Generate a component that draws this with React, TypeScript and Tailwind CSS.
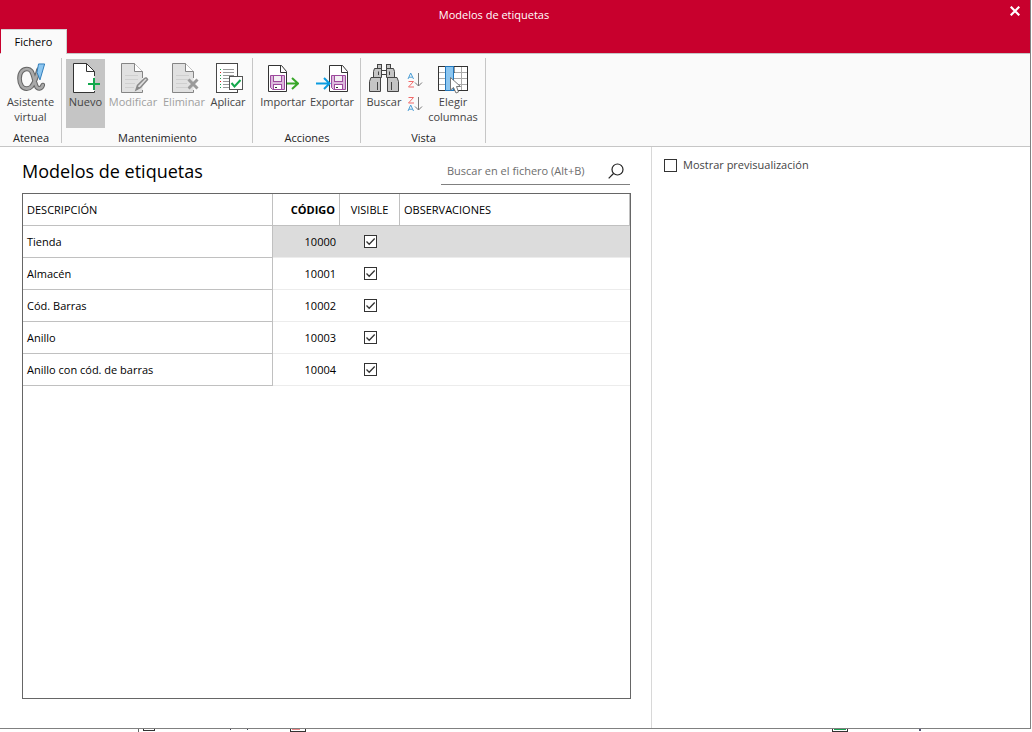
import React, { useState } from "react";

function PageShape({ fill, stroke }: { fill: string; stroke: string }) {
  return (
    <>
      <path d="M5.5 1.5H18.5L26.5 9.5V30.5H5.5Z" fill={fill} />
      <path d="M26.5 16V9.5L18.5 1.5H5.5V30.5H26.5V28" fill="none" stroke={stroke} />
      <path d="M18.5 1.5V9.5H26.5" fill="#fff" stroke={stroke} />
    </>
  );
}

function AlphaIcon() {
  const body =
    "M24 7C22 15 19.5 21 16.500 25C13.500 28.300 8.5 28 6 24.500C3 20.500 3 12.500 6 9C9 5.5 14 5.5 16.500 9C19 13 19.500 20 21.500 24.500C23 28 27 28 28.500 23.500";
  return (
    <svg width="32" height="32" viewBox="0 0 32 32" fill="none" aria-hidden="true">
      <g transform="translate(1 1) scale(0.94 0.94)">
        <path d={body} stroke="#666" strokeWidth="5" strokeLinecap="round" />
        <path d={body} stroke="#a9a9a9" strokeWidth="2.800" strokeLinecap="round" />
        <path d="M24 1H30.500L25.500 18L22.300 10Z" fill="#8cc6f0" stroke="#2a79b8" />
      </g>
    </svg>
  );
}

function NewIcon() {
  return (
    <svg width="33" height="32" viewBox="0 0 33 32" fill="none" aria-hidden="true">
      <path d="M4.500 1.500H17.500L25.500 9.500V30.500H4.500Z" fill="#fff" />
      <path d="M25.500 14V9.500L17.500 1.500H4.500V30.500H25.500V29" stroke="#333" />
      <path d="M17.500 1.500V9.500H25.500" stroke="#333" />
      <path d="M25 16V28M19 22H31" stroke="#12a84c" strokeWidth="2" />
    </svg>
  );
}

function EditIcon() {
  return (
    <svg width="34" height="32" viewBox="0 0 34 32" fill="none" aria-hidden="true">
      <PageShape fill="#e1e1e1" stroke="#858585" />
      <path d="M9 13.500H22M9 17.500H22M9 21.500H19M9 25.500H18" stroke="#cfcfcf" />
      <path d="M20 28L21.500 23.500L28.500 16.500Q30.500 15 31.500 17.500L24.500 25.500Z" fill="#ddd" stroke="#888" strokeWidth="1.500" />
      <path d="M20 28L24 26L21.500 24Z" fill="#888" />
    </svg>
  );
}

function DeleteIcon() {
  return (
    <svg width="32" height="32" viewBox="0 0 32 32" fill="none" aria-hidden="true">
      <g transform="translate(-1 0)">
        <PageShape fill="#e1e1e1" stroke="#858585" />
        <path d="M9 13.500H22M9 17.500H22M9 21.500H20M9 25.500H20" stroke="#cfcfcf" />
      </g>
      <path d="M20.500 17.500L29.500 26.500M29.500 17.500L20.500 26.500" stroke="#9b9b9b" strokeWidth="3" />
    </svg>
  );
}

function ApplyIcon() {
  return (
    <svg width="32" height="32" viewBox="0 0 32 32" fill="none" aria-hidden="true">
      <rect x="4.500" y="1.500" width="21" height="29" fill="#fff" stroke="#484848" />
      <path d="M11 7.500H22M11 10.500H22M11 13.500H22M11 16.500H17M11 19.500H17M11 22.500H17M11 25.500H17" stroke="#999" />
      <path d="M8 7.500H9M8 13.500H9M8 16.500H9M8 22.500H9M8 25.500H9" stroke="#18a050" />
      <path d="M8 10.500H9M8 19.500H9" stroke="#d22" />
      <rect x="17.500" y="14.500" width="13" height="13" fill="#fff" stroke="#555" />
      <path d="M19.500 21L22.500 24.500L28.500 18" stroke="#12a84c" strokeWidth="2" />
    </svg>
  );
}

function DiskPage() {
  return (
    <>
      <path d="M1.500 3.500H14.500L19.500 9.500V29.500H1.500Z" fill="#fff" stroke="#333" />
      <path d="M13.500 3.500V10.500H19.500" stroke="#333" />
      <path d="M3.500 13.500H17.500V27.500H5.500L3.500 25.500Z" fill="#dcb9dc" stroke="#9d4a9d" />
      <rect x="6.500" y="13.500" width="8" height="6" fill="#f3f0f3" stroke="#9d4a9d" />
      <rect x="6.500" y="22.500" width="8" height="5" fill="#fff" stroke="#9d4a9d" />
      <path d="M8 25.500H10" stroke="#333" />
    </>
  );
}

function ImportIcon() {
  return (
    <svg width="32" height="32" viewBox="0 0 32 32" fill="none" aria-hidden="true">
      <DiskPage />
      <path d="M20 21.500H31M25 16L31 21.500L25 27" stroke="#38a729" strokeWidth="2" />
    </svg>
  );
}

function ExportIcon() {
  return (
    <svg width="34" height="32" viewBox="0 0 34 32" fill="none" aria-hidden="true">
      <g transform="translate(13 0)"><DiskPage /></g>
      <path d="M1 21.500H14M9 16L14.500 21.500L9 27" stroke="#0a9be0" strokeWidth="2" />
    </svg>
  );
}

function BinocularsIcon() {
  return (
    <svg width="32" height="32" viewBox="0 0 32 32" fill="#c5c5c5" stroke="#444" aria-hidden="true">
      <path d="M13 8.500H19M13 12.500H19" />
      <rect x="9.500" y="2.500" width="4" height="4" />
      <rect x="18.500" y="2.500" width="4" height="4" />
      <path d="M6.500 6.500H13.500V15.500H5.500V9.500Z" />
      <path d="M18.500 6.500H25.500L26.500 9.500V15.500H18.500Z" />
      <path d="M3 15.500H12.500V29.500H1.500V19.500Z" />
      <path d="M19.500 15.500H29L30.500 19.500V29.500H19.500Z" />
      <path d="M9.500 20V28M23.500 20V28M10.500 9.500V13M21.500 9.500V13" />
    </svg>
  );
}

function SortIcon({ descending = false }: { descending?: boolean }) {
  const a = <path d="M0 6L2.700 0L5.500 6M1 4.200H4.500" stroke="#4c9ed5" />;
  const z = <path d="M.500 .500H5.500L.500 6H6" stroke="#f06a6a" />;
  return (
    <svg width="16" height="18" viewBox="0 0 16 18" fill="none" aria-hidden="true">
      <g transform="translate(1 2)">{descending ? z : a}</g>
      <g transform="translate(1 10)">{descending ? a : z}</g>
      <path d="M11.500 2V15M8 11.500L11.500 15L15 11.500" stroke="#777" />
    </svg>
  );
}

function ColumnsIcon() {
  return (
    <svg width="32" height="32" viewBox="0 0 32 32" fill="none" aria-hidden="true">
      <rect x="1.500" y="4.500" width="29" height="24" fill="#fff" />
      <path d="M2 10.500H30M2 16.500H30M2 22.500H30M24.500 5V28" stroke="#aaa" />
      <path d="M1.500 4V28.500H31M30.500 4V29M1 4.500H31M17 4V11" stroke="#333" />
      <rect x="8.500" y="4.500" width="8" height="24" fill="#8cc6f0" stroke="#2276bb" />
      <path d="M13.500 15.500V28L16.500 25.500L19 31L21.500 30L19.500 24.500H23.500Z" fill="#fff" stroke="#777" />
    </svg>
  );
}

function RibbonButton({
  icon,
  label,
  className,
}: {
  icon: React.ReactNode;
  label: string;
  className: string;
}) {
  return (
    <button
      type="button"
      className={`flex h-[69px] flex-col items-center pt-[3px] text-[11px] leading-[15px] text-[#444] disabled:text-[#a0a0a0] ${className}`}
      disabled={label === "Modificar" || label === "Eliminar"}
    >
      {icon}
      <span className="w-max max-w-[56px] text-center">{label}</span>
    </button>
  );
}

function RibbonGroup({
  title,
  className,
  children,
}: {
  title: string;
  className: string;
  children: React.ReactNode;
}) {
  return (
    <section className={`flex flex-col border-r border-[#c6c6c6] ${className}`} aria-label={title}>
      <div className="flex pt-px">{children}</div>
      <h2 className="mt-1 pl-px text-center text-[11px] leading-[11px] text-[#222]">{title}</h2>
    </section>
  );
}

function CheckBox(props: React.InputHTMLAttributes<HTMLInputElement>) {
  return (
    <span className="relative block size-[13px] shrink-0">
      <input type="checkbox" className="peer block size-[13px] appearance-none border border-[#333] bg-white" {...props} />
      <svg className="pointer-events-none absolute inset-0 hidden peer-checked:block" width="13" height="13" viewBox="0 0 13 13" fill="none" aria-hidden="true">
        <path d="M2.500 6.500L5.200 9.300L10.700 3.500" stroke="#333" strokeWidth="1.300" />
      </svg>
    </span>
  );
}

const initialRows = [
  { name: "Tienda", code: 10000, visible: true },
  { name: "Almacén", code: 10001, visible: true },
  { name: "Cód. Barras", code: 10002, visible: true },
  { name: "Anillo", code: 10003, visible: true },
  { name: "Anillo con cód. de barras", code: 10004, visible: true },
];

function ModelsTable() {
  const [rows, setRows] = useState(initialRows);
  const toggle = (code: number) =>
    setRows(rows.map((r) => (r.code === code ? { ...r, visible: !r.visible } : r)));
  return (
    <div className="flex-1 border border-[#666]">
      <table className="w-full table-fixed border-separate border-spacing-0 text-[11px] leading-4 text-black">
        <colgroup>
          <col className="w-[250px]" />
          <col className="w-[67px]" />
          <col className="w-[60px]" />
          <col />
        </colgroup>
        <thead>
          <tr className="h-8 *:border-r *:border-b *:border-[#c0c0c0] *:p-0">
            <th className="text-left font-normal"><span className="pl-1">DESCRIPCIÓN</span></th>
            <th className="text-right font-bold"><span className="pr-1">CÓDIGO</span></th>
            <th className="text-center font-normal">VISIBLE</th>
            <th className="text-left font-normal"><span className="pl-1">OBSERVACIONES</span></th>
          </tr>
        </thead>
        <tbody>
          {rows.map((row, i) => (
            <tr key={row.code} className={i === 0 ? "h-8 *:p-0 [&>td]:bg-[#dcdcdc]" : "h-8 *:p-0"}>
              <th scope="row" className="border-r border-b border-[#c0c0c0] text-left font-normal">
                <span className="pl-1">{row.name}</span>
              </th>
              <td className="border-b border-[#ececec] text-right"><span className="pr-1">{row.code}</span></td>
              <td className="border-b border-[#ececec]">
                <div className="flex justify-center">
                  <CheckBox checked={row.visible} onChange={() => toggle(row.code)} aria-label={`Visible: ${row.name}`} />
                </div>
              </td>
              <td className="border-b border-[#ececec]" />
            </tr>
          ))}
        </tbody>
      </table>
    </div>
  );
}

function BackgroundEdge() {
  return (
    <div className="flex h-[3px] items-start overflow-hidden pl-[138px]" aria-hidden="true">
      <span className="h-[3px] w-px bg-[#666]" />
      <span className="ml-1 h-[2px] w-3 border-x border-b border-[#333]" />
      <span className="ml-[75px] h-px w-px bg-[#445]" />
      <span className="ml-4 h-px w-px bg-[#445]" />
      <span className="ml-[42px] h-[3px] w-4 border-x border-b border-[#333] px-px">
        <span className="block h-px w-2 bg-[#e88]" />
      </span>
      <span className="ml-[526px] h-[3px] w-4 border-x border-b border-[#333] px-px">
        <span className="block h-px w-full bg-[#18a050]" />
      </span>
      <span className="ml-[71px] h-[2px] w-[2px] bg-[#557]" />
    </div>
  );
}

export default function App() {
  return (
    <div className="flex h-screen flex-col overflow-hidden bg-white font-['Open_Sans','Noto_Sans',sans-serif]">
      <main className="mr-px flex min-h-0 flex-1 flex-col border-r border-b border-[#808080]">
        <header className="relative flex flex-col border-b border-[#c6c6c6] bg-[#c8002d]">
          <h1 className="h-[29px] pr-[42px] text-center text-[11px] leading-[29px] text-white">
            Modelos de etiquetas
          </h1>
          <button type="button" aria-label="Cerrar" className="absolute top-1.5 right-2.5 text-white">
            <svg width="10" height="10" viewBox="0 0 10 10" fill="none" aria-hidden="true">
              <path d="M.700 .700L9.300 9.300M9.300 .700L.700 9.300" stroke="currentColor" strokeWidth="2.200" />
            </svg>
          </button>
          <nav className="-mb-px flex pl-px">
            <button type="button" className="h-[25px] w-[66px] border-t border-r border-[#d0d0d0] bg-[#fafafa] text-[11px] leading-6 text-black">
              Fichero
            </button>
          </nav>
        </header>

        <div className="flex border-b border-[#c6c6c6] bg-[#fafafa] pt-1 pb-[3px]">
          <RibbonGroup title="Atenea" className="w-[62px]">
            <RibbonButton className="w-full" icon={<AlphaIcon />} label="Asistente virtual" />
          </RibbonGroup>
          <RibbonGroup title="Mantenimiento" className="w-[191px] *:first:pl-1">
            <RibbonButton className="w-[39px] bg-[#c5c5c5]" icon={<NewIcon />} label="Nuevo" />
            <RibbonButton className="w-[56px]" icon={<EditIcon />} label="Modificar" />
            <RibbonButton className="w-[46px]" icon={<DeleteIcon />} label="Eliminar" />
            <RibbonButton className="w-[42px]" icon={<ApplyIcon />} label="Aplicar" />
          </RibbonGroup>
          <RibbonGroup title="Acciones" className="w-[108px] *:first:pl-1">
            <RibbonButton className="w-[52px]" icon={<ImportIcon />} label="Importar" />
            <RibbonButton className="w-[46px]" icon={<ExportIcon />} label="Exportar" />
          </RibbonGroup>
          <RibbonGroup title="Vista" className="w-[125px] *:first:pl-1">
            <RibbonButton className="w-[38px]" icon={<BinocularsIcon />} label="Buscar" />
            <div className="flex w-6 flex-col items-center gap-1.5 pt-3">
              <button type="button" aria-label="Orden ascendente"><SortIcon /></button>
              <button type="button" aria-label="Orden descendente"><SortIcon descending /></button>
            </div>
            <RibbonButton className="w-[52px]" icon={<ColumnsIcon />} label="Elegir columnas" />
          </RibbonGroup>
        </div>

        <div className="flex min-h-0 flex-1">
          <section className="flex min-w-0 flex-1 flex-col border-r border-[#d8d8d8] pr-5 pb-[29px] pl-[22px]">
            <div className="flex h-[46px] items-start justify-between">
              <h2 className="pt-2.5 text-[18px] leading-7 text-black">Modelos de etiquetas</h2>
              <label className="mr-px mt-2.5 flex h-7 w-[189px] items-center border-b border-[#808080] pr-1.5 pl-1.5">
                <input
                  type="search"
                  aria-label="Buscar en el fichero"
                  placeholder="Buscar en el fichero (Alt+B)"
                  className="min-w-0 flex-1 bg-transparent text-[11px] leading-4 outline-none placeholder:text-[#6d6d6d]"
                />
                <svg width="16" height="16" viewBox="0 0 16 16" fill="none" stroke="#222" strokeWidth="1.200" aria-hidden="true">
                  <circle cx="9.500" cy="6.500" r="5.500" />
                  <path d="M5.500 10.500L.700 15.300" />
                </svg>
              </label>
            </div>
            <ModelsTable />
          </section>
          <aside className="w-[378px] shrink-0 px-3 pt-2.5">
            <label className="flex items-center gap-1.5 text-[11px] leading-4 text-[#444]">
              <CheckBox />
              Mostrar previsualización
            </label>
          </aside>
        </div>
      </main>
      <BackgroundEdge />
    </div>
  );
}
